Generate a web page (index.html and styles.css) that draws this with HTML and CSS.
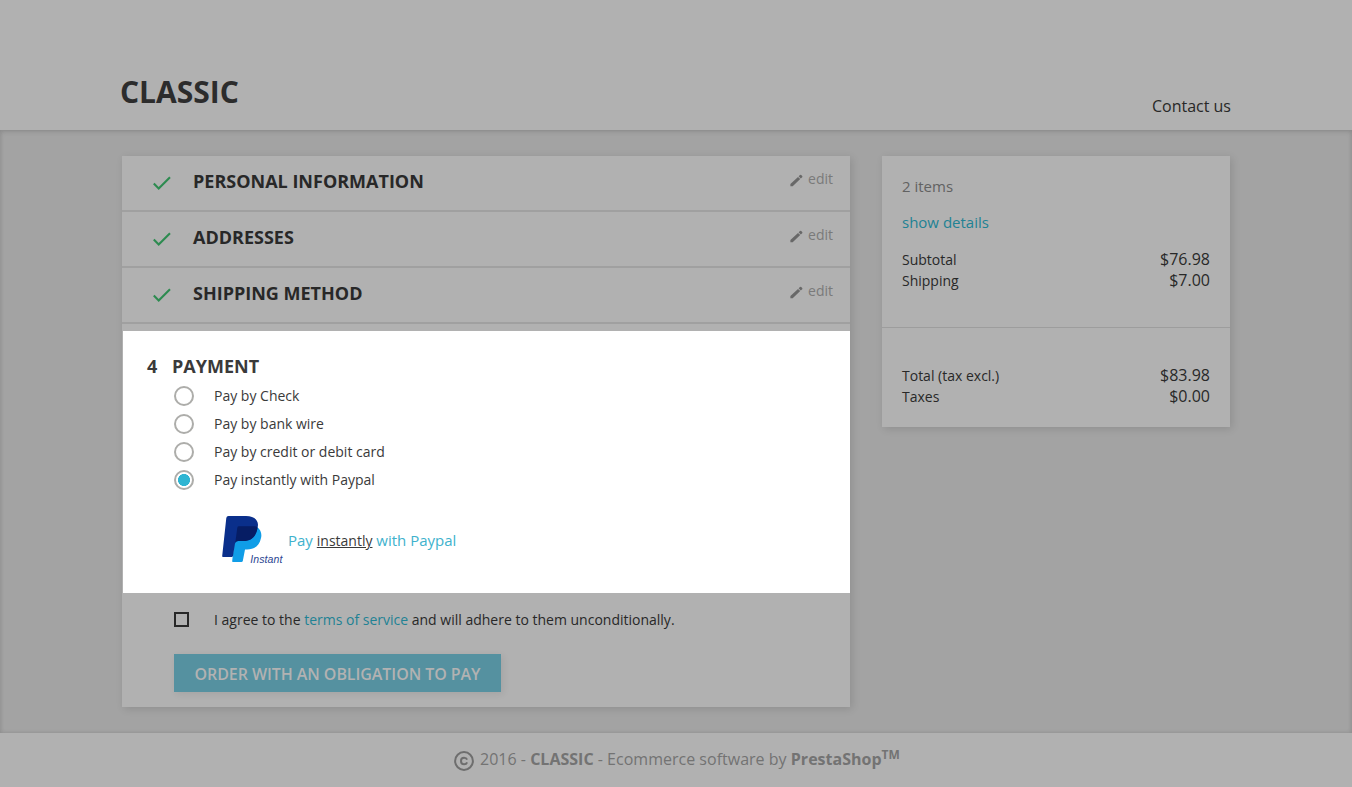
FILE: index.html
```html
<!DOCTYPE html>
<html lang="en">
<head>
<meta charset="utf-8">
<title>Classic - Checkout</title>
<link rel="stylesheet" href="styles.css">
</head>
<body>
<header class="header">
  <div class="logo">CLASSIC</div>
  <a class="contact">Contact us</a>
</header>
<main class="main">
  <section class="checkout">
    <div class="step">
      <svg class="check" width="20" height="16" viewBox="0 0 20 16"><path d="M1.8 8.6 L6.7 13.5 L18 2.2"/></svg>
      <h2 class="step-title">PERSONAL INFORMATION</h2>
      <span class="edit"><svg class="pencil" width="13" height="13" viewBox="0 0 13 13"><path d="M.4 12.300V10L8 2.900 10.200 5.100 2.700 12.300ZM8.600 2.300 10 1Q10.600.5 11.200 1L12.200 2Q12.700 2.600 12.200 3.200L10.800 4.500Z"/></svg><span class="edit-label">edit</span></span>
    </div>
    <div class="step">
      <svg class="check" width="20" height="16" viewBox="0 0 20 16"><path d="M1.8 8.6 L6.7 13.5 L18 2.2"/></svg>
      <h2 class="step-title">ADDRESSES</h2>
      <span class="edit"><svg class="pencil" width="13" height="13" viewBox="0 0 13 13"><path d="M.4 12.300V10L8 2.900 10.200 5.100 2.700 12.300ZM8.600 2.300 10 1Q10.600.5 11.200 1L12.200 2Q12.700 2.600 12.200 3.200L10.800 4.500Z"/></svg><span class="edit-label">edit</span></span>
    </div>
    <div class="step">
      <svg class="check" width="20" height="16" viewBox="0 0 20 16"><path d="M1.8 8.6 L6.7 13.5 L18 2.2"/></svg>
      <h2 class="step-title">SHIPPING METHOD</h2>
      <span class="edit"><svg class="pencil" width="13" height="13" viewBox="0 0 13 13"><path d="M.4 12.300V10L8 2.900 10.200 5.100 2.700 12.300ZM8.600 2.300 10 1Q10.600.5 11.200 1L12.200 2Q12.700 2.600 12.200 3.200L10.800 4.500Z"/></svg><span class="edit-label">edit</span></span>
    </div>
    <div class="payment">
      <h2 class="payment-title"><span class="number">4</span><span>PAYMENT</span></h2>
      <div class="option"><span class="radio"></span><span class="option-label">Pay by Check</span></div>
      <div class="option"><span class="radio"></span><span class="option-label">Pay by bank wire</span></div>
      <div class="option"><span class="radio"></span><span class="option-label">Pay by credit or debit card</span></div>
      <div class="option"><span class="radio selected"></span><span class="option-label">Pay instantly with Paypal</span></div>
      <div class="paypal">
        <svg class="paypal-logo" width="66" height="54" viewBox="0 0 66 54">
          <path class="pp-light" d="M18 15 H35 L39 15 C43 18 44 22 43 26 C41.500 34 36 37.500 29 37.500 H27 L24.800 49 Q24.500 50 23.500 50 H14.800 Q14 50 14.200 49 Z"/>
          <path class="pp-dark" d="M10.500 4 H28 C37 4 41.500 9 39.500 16 C38 25 33 29 25 29 H20 Q17.500 29 17 31.500 L15 43.700 Q14.800 45 13.500 45 H5 Q4 45 4.200 44 L8.300 6 Q8.600 4 10.500 4 Z"/>
          <path class="pp-mid" d="M20.500 14.300 H37 Q39.200 14.300 39.500 16 C38 25 33 29 25 29 H20 Q17.900 29 17.300 30.800 L19.300 15.800 Q19.500 14.300 20.500 14.300 Z"/>
          <text x="32.200" y="51">Instant</text>
        </svg>
        <span class="paypal-text">Pay <u>instantly</u> with Paypal</span>
      </div>
    </div>
    <div class="confirm">
      <div class="terms"><span class="box"></span><span>I agree to the <a>terms of service</a> and will adhere to them unconditionally.</span></div>
      <button class="order"><span>ORDER WITH AN OBLIGATION TO PAY</span></button>
    </div>
  </section>
  <aside class="summary">
    <div class="summary-top">
      <p class="items">2 items</p>
      <p class="details">show details</p>
      <div class="line"><span>Subtotal</span><b>$76.98</b></div>
      <div class="line"><span>Shipping</span><b>$7.00</b></div>
    </div>
    <div class="summary-bottom">
      <div class="line"><span>Total (tax excl.)</span><b>$83.98</b></div>
      <div class="line"><span>Taxes</span><b>$0.00</b></div>
    </div>
  </aside>
</main>
<footer class="footer">
  <svg class="copy" width="20" height="20" viewBox="0 0 20 20"><circle cx="10" cy="10" r="8.900"/><path d="M13.100 8.700 Q12.400 6.800 10.100 6.800 Q7 6.800 7 10 Q7 13.200 10.100 13.200 Q12.400 13.200 13.100 11.300"/></svg>
  <span class="footer-text">2016 - <b>CLASSIC</b> - Ecommerce software by <b>PrestaShop<sup>TM</sup></b></span>
</footer>
</body>
</html>
```
FILE: styles.css
```css
* { box-sizing: border-box; }
body {
  margin: 0;
  width: 1352px;
  height: 787px;
  overflow: hidden;
  background: #a3a3a3;
  color: #282828;
  font-family: "Open Sans", "Noto Sans", sans-serif;
  font-size: 14px;
}
h2, p { margin: 0; }
.header {
  height: 130px;
  padding: 72px 121px 0 120px;
  display: flex;
  justify-content: space-between;
  background: #b1b1b1;
}
.logo { font-size: 30px; line-height: 40px; font-weight: 700; color: #2c2c2c; }
.contact { padding-top: 22px; font-size: 16px; line-height: 24px; }
.main {
  height: 603px;
  padding: 26px 122px 0;
  display: flex;
  align-items: flex-start;
  gap: 32px;
  box-shadow: inset 0 2px 5px rgba(0,0,0,.11), inset 0 -1px 5px rgba(0,0,0,.03), inset 1px 0 5px rgba(0,0,0,.02), inset -1px 0 5px rgba(0,0,0,.02);
}
.checkout, .summary { background: #b1b1b1; box-shadow: 2px 2px 8px rgba(0,0,0,.12); }
.checkout { width: 728px; height: 551px; }
.step {
  height: 56px;
  padding: 0 17px 0 31px;
  display: flex;
  align-items: flex-start;
  border-bottom: 2px solid #a0a0a0;
}
.check { margin: 19px 20px 0 -1px; fill: none; stroke: #2d8b50; stroke-width: 2.1; }
.step-title { margin-top: 13px; padding-left: 1px; font-size: 18px; line-height: 25px; }
.edit { margin: 13px 0 0 auto; display: flex; align-items: flex-start; gap: 5px; color: #7a7a7a; line-height: 20px; }
.pencil { margin-top: 5px; fill: #686868; }
.payment {
  width: 727px;
  height: 262px;
  margin: 7px 0 0 1px;
  padding: 22px 24px 0;
  background: #fff;
  color: #3a3a3a;
}
.payment-title { display: flex; height: 29px; font-size: 18px; line-height: 26px; }
.number { width: 25px; }
.option { height: 28px; padding-left: 27px; display: flex; align-items: center; gap: 20px; }
.option-label { padding-bottom: 2px; }
.radio { width: 20px; height: 20px; border: 2px solid #adadaa; border-radius: 50%; }
.selected { background: radial-gradient(circle, #2fb5d2 0 5.700px, transparent 6.300px); }
.paypal { display: flex; padding: 18px 0 0 71px; }
.paypal-logo { overflow: visible; }
.pp-dark { fill: #0a2f8b; }
.pp-light { fill: #109de7; }
.pp-mid { fill: #061d64; }
.paypal-logo text { font: italic 10.500px "Liberation Sans", sans-serif; fill: #2a4591; letter-spacing: .1px; }
.paypal-text { margin: 16px 0 0 4px; font-size: 15px; line-height: 24px; color: #3eb2cd; }
.paypal-text u { color: #3a3a3a; font-size: 14px; }
.confirm { padding: 16px 52px 0; }
.terms { display: flex; height: 45px; line-height: 21px; }
.box { width: 15px; height: 15px; margin: 3px 25px 0 0; border: 2px solid #282828; }
.terms a, .details { color: #218294; }
.order {
  width: 327px;
  height: 38px;
  padding: 0;
  display: block;
  border: 0;
  background: #5591a0;
  color: #b2b2b2;
  font: 600 16px/40px "Open Sans", sans-serif;
  letter-spacing: -.07px;
  box-shadow: 2px 2px 7px rgba(0,0,0,.08);
}
.summary { width: 348px; height: 271px; }
.summary-top { height: 172px; padding: 18px 20px 0; border-bottom: 1px solid #9d9d9d; }
.items, .details { height: 36px; font-size: 15px; line-height: 24px; }
.items { color: #626262; }
.details { height: 39px; }
.line { height: 21px; display: flex; justify-content: space-between; line-height: 21px; }
.line b { font-size: 16px; font-weight: 400; }
.summary-bottom { padding: 37px 20px 0; }
.footer { height: 54px; display: flex; padding: 14px 0 0 454px; background: #b1b1b1; color: #737373; font-size: 16px; line-height: 24px; }
.copy { margin: 4px 6px 0 0; fill: none; stroke: #6e6e6e; stroke-width: 2; }
.footer-text { white-space: nowrap; letter-spacing: .012px; }
sup { font-size: 75%; line-height: 0; vertical-align: baseline; position: relative; top: -6px; }
```
